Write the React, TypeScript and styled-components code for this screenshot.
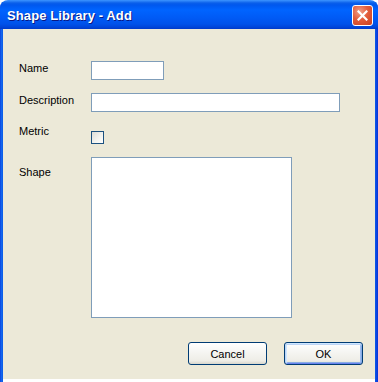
import styled, { createGlobalStyle } from "styled-components";

const GlobalStyle = createGlobalStyle`
    html, body {
        margin: 0;
        padding: 0;
        background: #ffffff;
    }
    * {
        box-sizing: border-box;
    }
`

const Window = styled.div`
    width: 378px;
    height: 382px;
    display: flex;
    flex-direction: column;
    background: linear-gradient(to right, #0831d9 0, #166aee 1px, #0b5ae8 3px, transparent 3px, transparent 375px, #0b5ae8 375px, #0831d9 378px);
    border-radius: 8px 8px 0 0;
    overflow: hidden;
    font-family: "Liberation Sans", Arial, sans-serif;
    font-size: 11px;
    color: #000;
`

const TitleBar = styled.div`
    height: 29px;
    flex: none;
    display: flex;
    align-items: center;
    justify-content: space-between;
    padding: 0 5px 0 7px;
    background: linear-gradient(to bottom,
        #3d95ff 0px, #0a5fea 3px, #0058ee 5px, #0064ff 10px,
        #005af5 18px, #0052ea 24px, #0046da 27px, #003ac9 29px);
`

const Title = styled.span`
    color: #ffffff;
    font-weight: bold;
    font-size: 13px;
    letter-spacing: 0.1px;
    text-shadow: 1px 1px 0 #0a1883;
    margin-top: 1px;
`

const CloseButton = styled.button`
    width: 21px;
    height: 21px;
    margin-top: 2px;
    padding: 0;
    border: 1px solid #ffffff;
    border-radius: 3px;
    background: radial-gradient(circle at 35% 30%, #f0a08a 0, #e35d3c 45%, #c9401f 100%);
    display: flex;
    align-items: center;
    justify-content: center;
`

const Body = styled.div`
    flex: 1;
    margin: 0 3px 3px 3px;
    background: #ece9d8;
    padding: 32px 12px 14px 16px;
    display: flex;
    flex-direction: column;
`

const Row = styled.div<{ $gap: number }>`
    display: flex;
    align-items: flex-start;
    margin-bottom: ${p => p.$gap}px;
`

const Label = styled.div<{ $offset: number }>`
    width: 72px;
    flex: none;
    line-height: 13px;
    padding-top: ${p => p.$offset}px;
`

const TextInput = styled.div<{ $width: number }>`
    width: ${p => p.$width}px;
    height: 19px;
    background: #ffffff;
    border: 1px solid #7f9db9;
`

const ShapeBox = styled.div`
    width: 201px;
    height: 161px;
    background: #ffffff;
    border: 1px solid #7f9db9;
`

const Checkbox = styled.div`
    width: 13px;
    height: 13px;
    margin-top: 6px;
    border: 1px solid #1c5180;
    background: linear-gradient(135deg, #dcdcd7 0%, #f4f4f0 60%, #ffffff 100%);
`

const Footer = styled.div`
    margin-top: auto;
    display: flex;
    justify-content: flex-end;
    gap: 17px;
`

const Button = styled.button<{ $default?: boolean }>`
    width: 79px;
    height: 23px;
    padding: 0;
    font-family: "Liberation Sans", Arial, sans-serif;
    font-size: 11px;
    color: #000;
    border: 1px solid #003c74;
    border-radius: 3px;
    background: linear-gradient(to bottom, #ffffff 0%, #f6f6f3 40%, #eeede6 85%, #d8d6cc 100%);
    box-shadow: ${p => p.$default
        ? "inset 0 1px 0 #cee7ff, inset 1px 0 0 #bcd4f6, inset -1px 0 0 #89ade4, inset 0 -1px 0 #6982ee, inset 0 2px 0 #bcd4f6, inset 2px 0 0 #cee7ff, inset -2px 0 0 #9cbcf0, inset 0 -2px 0 #89ade4"
        : "none"};
`

export default function App() {
    return <>
        <GlobalStyle />
        <Window>
            <TitleBar>
                <Title>Shape Library - Add</Title>
                <CloseButton>
                    <svg width="11" height="11" viewBox="0 0 11 11">
                        <path d="M1.5 1.5 L9.5 9.5 M9.5 1.5 L1.5 9.5" stroke="#ffffff" strokeWidth="2.2" strokeLinecap="square" />
                    </svg>
                </CloseButton>
            </TitleBar>
            <Body>
                <Row $gap={13}>
                    <Label $offset={1}>Name</Label>
                    <TextInput $width={73} />
                </Row>
                <Row $gap={13}>
                    <Label $offset={1}>Description</Label>
                    <TextInput $width={249} />
                </Row>
                <Row $gap={13}>
                    <Label $offset={0}>Metric</Label>
                    <Checkbox />
                </Row>
                <Row $gap={0}>
                    <Label $offset={9}>Shape</Label>
                    <ShapeBox />
                </Row>
                <Footer>
                    <Button>Cancel</Button>
                    <Button $default>OK</Button>
                </Footer>
            </Body>
        </Window>
    </>
}
